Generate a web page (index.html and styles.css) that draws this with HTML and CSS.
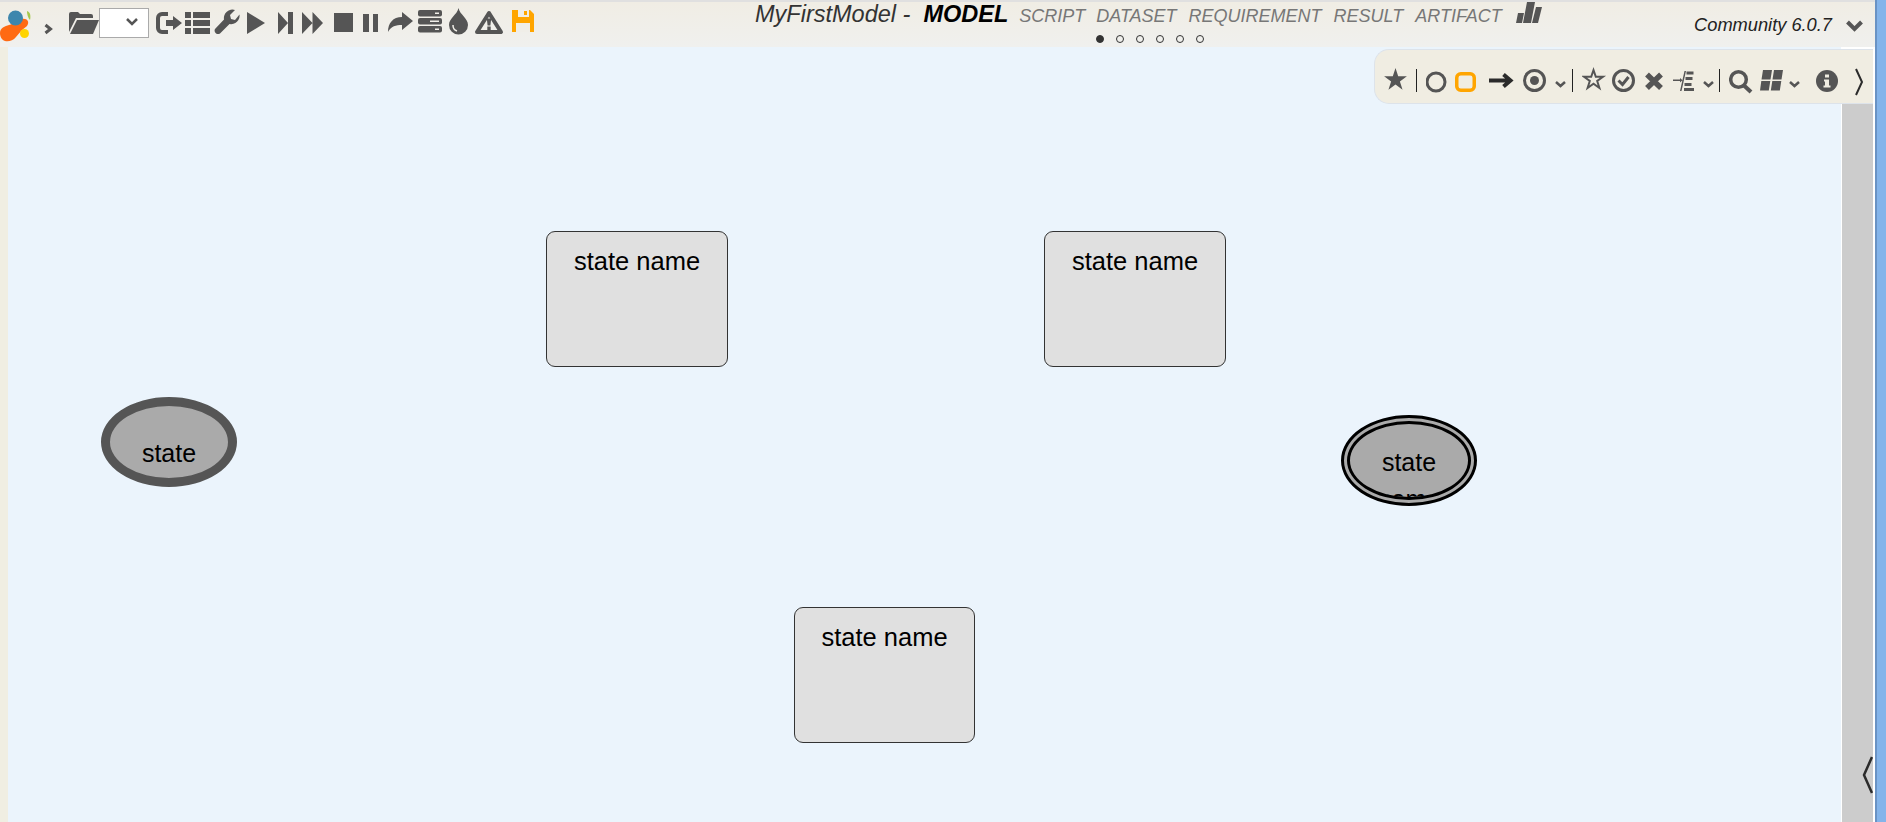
FILE: index.html
```html
<!DOCTYPE html>
<html>
<head>
    <title>MyFirstModel - MODEL</title>
    <meta name="viewport" content="width=device-width, initial-scale=1">
    <link rel="stylesheet" href="styles.css">
</head>
<body>
    <div class="app">
        <header class="topbar">
            <svg width="44" height="45" viewBox="0 2 44 45">
                <path fill="#ff6a13" d="M0 33 C0 28 5 26 9 25 C14 24 17 19 22 19 C27 18 30 22 27 26 C22 30 19 33 16 37 C13 41 8 42 5 41 C2 40 0 37 0 33Z"/>
                <circle cx="15.500" cy="18" r="7.500" fill="#3d86ad"/>
                <circle cx="24.500" cy="33.500" r="4.500" fill="#ffd400"/>
                <path fill="#a5c84a" d="M27 11 C30 12 31 15 30 20 C28 18 27 14 27 11Z"/>
            </svg>
            <svg width="24" height="45" viewBox="0 2 24 45"><path class="line" stroke-width="3" d="M1.500 25 L6.500 29 L1.500 33"/></svg>
            <svg width="31" height="45" viewBox="0 2 31 45">
                <path class="ico" d="M1 32 V14 q0-2 2-2 h7 l2 2 h11 q2 0 2 2 v2 H8 Z"/>
                <path class="ico" d="M2 34 L9 20 H31 L25 34Z"/>
            </svg>
            <div class="model-select">
                <svg width="12" height="8" viewBox="0 0 12 8"><path class="line" stroke-width="2.500" d="M1 1 L6 6 L11 1"/></svg>
            </div>
            <svg class="after-select" width="29" height="45" viewBox="0 2 29 45">
                <path class="line" stroke-width="4" d="M12 14 H6 a4 4 0 0 0 -4 4 V28 a4 4 0 0 0 4 4 H12"/>
                <path class="ico" d="M10 20 h7 v-4 l9 7 -9 7 v-4 h-7z"/>
            </svg>
            <svg width="29" height="45" viewBox="0 2 29 45">
                <path class="ico" d="M0 12 h6 v6 H0z M8 12 h17 v6 H8z M0 20 h6 v6 H0z M8 20 h17 v6 H8z M0 28 h6 v6 H0z M8 28 h17 v6 H8z"/>
            </svg>
            <svg width="33" height="45" viewBox="0 2 33 45">
                <path class="ico" d="M1 29 L10 19.500 A8.500 8.500 0 0 1 21 10 L16 15 L17 19 L21 20 L25.500 14.500 A8.500 8.500 0 0 1 15.500 24 L6 33.500 A3.500 3.500 0 0 1 1 29Z"/>
            </svg>
            <svg width="31" height="45" viewBox="0 2 31 45"><path class="ico" d="M0 12 L18 23 L0 34Z"/></svg>
            <svg width="24" height="45" viewBox="0 2 24 45"><path class="ico" d="M0 12 L10 23 L0 34Z M10 12 h5 v22 h-5z"/></svg>
            <svg width="32" height="45" viewBox="0 2 32 45"><path class="ico" d="M0 12 L10.500 23 L0 34Z M10.500 12 L21 23 L10.500 34Z"/></svg>
            <svg width="29" height="45" viewBox="0 2 29 45"><rect class="ico" x="0" y="13" width="19" height="19"/></svg>
            <svg width="25" height="45" viewBox="0 2 25 45"><path class="ico" d="M0 14 h6 v18 H0z M10 14 h5 v18 h-5z"/></svg>
            <svg width="30" height="45" viewBox="0 2 30 45"><path class="ico" d="M14 12 L25 21 L14 30 V25 C8 25 3 26 0 32 C0 23 5 17 14 17Z"/></svg>
            <svg width="31" height="45" viewBox="0 2 31 45">
                <rect class="ico" x="0" y="10" width="24" height="6.500" rx="2"/>
                <rect class="ico" x="0" y="18" width="24" height="6.500" rx="2"/>
                <rect class="ico" x="0" y="26" width="24" height="6.500" rx="2"/>
                <path class="cut" d="M17 12.500 h4 v1.500 h-4z M12 20.500 h9 v1.500 h-9z M17 28.500 h4 v1.500 h-4z"/>
            </svg>
            <svg width="26" height="45" viewBox="0 2 26 45">
                <path class="ico" d="M9.500 8 C11 15 19 18 19 25 A9.500 9.500 0 0 1 0 25 C0 18 8 15 9.500 8Z"/>
                <path class="line cut-line" stroke-width="1.500" d="M4 25 A5.500 6 0 0 0 8 31"/>
            </svg>
            <svg width="37" height="45" viewBox="0 2 37 45">
                <path class="line" stroke-width="4" stroke-linejoin="round" d="M14 13 L26 32 H2Z"/>
                <path class="ico" d="M11.800 18.500 h4.400 l-.8 7 h-2.800z M12.300 26.500 h3.400 v3.500 h-3.400z"/>
            </svg>
            <svg width="22" height="45" viewBox="0 2 22 45">
                <path fill="#ffa500" d="M0 10 H18 L22 14 V32 H0Z"/>
                <path class="cut" d="M6 10 h11 v7 H6z M4 23 h14 v9 H4z"/>
                <path fill="#ffa500" d="M12 11 h3 v4 h-3z"/>
            </svg>

            <div class="title-block">
                <div class="title-row">
                    <span class="model-name">MyFirstModel -</span>
                    <span class="tab-current">MODEL</span>
                    <span class="tab tab-first">SCRIPT</span>
                    <span class="tab">DATASET</span>
                    <span class="tab">REQUIREMENT</span>
                    <span class="tab">RESULT</span>
                    <span class="tab">ARTIFACT</span>
                    <svg class="chart" width="26" height="21" viewBox="0 0 26 21">
                        <path class="ico" d="M2 11 H8 L6 21 H0Z M11 0 H19 L15 21 H7Z M20 5 H26 L22 21 H16Z"/>
                    </svg>
                </div>
                <div class="dots">
                    <span class="dot dot-on"></span>
                    <span class="dot"></span>
                    <span class="dot"></span>
                    <span class="dot"></span>
                    <span class="dot"></span>
                    <span class="dot"></span>
                </div>
            </div>

            <div class="version">Community 6.0.7</div>
            <svg class="version-arrow" width="17" height="12" viewBox="0 0 17 12"><path class="line" stroke-width="4" d="M1.500 2 L8.500 9 L15.500 2"/></svg>
        </header>

        <div class="workspace">
            <div class="edge"></div>
            <main class="canvas">
                <div class="state-box box-a">state name</div>
                <div class="state-box box-b">state name</div>
                <div class="state-box box-c">state name</div>
                <div class="state-start">state</div>
                <div class="state-end">state name</div>
            </main>
            <aside class="side-panel">
                <svg class="panel-open" width="11" height="38" viewBox="0 0 11 38"><path class="line dark" stroke-width="2.500" d="M10 1 L2 19 L10 37"/></svg>
            </aside>

            <div class="palette">
                <svg width="32" height="53" viewBox="0 50 32 53"><polygon class="ico" points="11.500,68 14.200,76.300 22.900,76.300 15.900,81.400 18.550,89.700 11.500,84.600 4.450,89.700 7.100,81.400 0.100,76.300 8.800,76.300"/></svg>
                <span class="sep"></span>
                <svg width="29" height="53" viewBox="0 50 29 53"><circle class="line" stroke-width="3" cx="10" cy="82" r="9"/></svg>
                <svg width="33" height="53" viewBox="0 50 33 53"><rect fill="none" stroke="#ffa500" stroke-width="3.500" x="1.750" y="73.750" width="17.500" height="16.500" rx="4"/></svg>
                <svg width="35" height="53" viewBox="0 50 35 53"><path class="line dark" stroke-width="4" d="M1 80.500 H22 M15.500 74.500 L22.500 80.500 L15.500 86.500"/></svg>
                <svg width="32" height="53" viewBox="0 50 32 53"><circle class="line" stroke-width="3" cx="11.500" cy="80.500" r="10"/><circle class="ico" cx="11.500" cy="80.500" r="4.500"/></svg>
                <svg width="17" height="53" viewBox="0 50 17 53"><path class="line" stroke-width="2.500" d="M1 82 L5.500 86 L10 82"/></svg>
                <span class="sep"></span>
                <svg width="30" height="53" viewBox="0 50 30 53"><polygon class="line" stroke-width="2" points="11.500,70 13.800,76.800 21,76.800 15.200,81 17.400,88 11.500,83.800 5.600,88 7.800,81 2,76.800 9.200,76.800"/></svg>
                <svg width="32" height="53" viewBox="0 50 32 53"><circle class="line" stroke-width="3" cx="11.500" cy="80.500" r="10"/><path class="line" stroke-width="3" d="M6.500 80.500 L10.500 84.500 L16.500 77"/></svg>
                <svg width="29" height="53" viewBox="0 50 29 53"><path class="line" stroke-width="5.500" d="M3 74.500 L17 88 M17 74.500 L3 88"/></svg>
                <svg width="30" height="53" viewBox="0 50 30 53">
                    <path class="ico" d="M0 79.500 h7 v-1.500 l2.500 2.200 -2.500 2.200 v-1.400 H0z M11.500 71 h1.500 L8.500 91 H7z M13.500 71.500 h7 v3 h-7z M12.500 77 h7 v3 h-7z M11.500 83 h7 v3 h-7z M11 88 h10 v3 h-10z"/>
                </svg>
                <svg width="16" height="53" viewBox="0 50 16 53"><path class="line" stroke-width="2.500" d="M1 82 L5.500 86 L10 82"/></svg>
                <span class="sep"></span>
                <svg width="31" height="53" viewBox="0 50 31 53"><circle class="line" stroke-width="3.500" cx="9.500" cy="79.500" r="7.800"/><path class="line" stroke-width="4" d="M15 85.500 L22 92"/></svg>
                <svg width="29" height="53" viewBox="0 50 29 53"><path class="ico" d="M3 70 H12 L10.500 79.500 H1.500Z M14 70 H23 L21.500 79.500 H12.500Z M1.300 81 H10.300 L8.800 90.500 H0Z M12.300 81 H21.300 L19.800 90.500 H10.800Z"/></svg>
                <svg width="27" height="53" viewBox="0 50 27 53"><path class="line" stroke-width="2.500" d="M1 82 L5.500 86 L10 82"/></svg>
                <svg width="39" height="53" viewBox="0 50 39 53">
                    <circle class="ico" cx="11" cy="81" r="11"/>
                    <path class="cut-light" d="M9 74.500 h4 v3 h-4z M8 79.500 h5 v6 h1.500 v2 h-7 v-2 H9 v-4 H8z"/>
                </svg>
                <svg width="10" height="53" viewBox="0 50 10 53"><path class="line dark" stroke-width="2" d="M1 69 L7 82 L1 95"/></svg>
            </div>
        </div>
    </div>
</body>
</html>
```

FILE: styles.css
```css
html, body { margin: 0; height: 100%; overflow: hidden; }
body { font-family: "Liberation Sans", Arial, sans-serif; background: #84b4ea; }
svg { display: block; flex: none; }

.app { width: 1875px; height: 100%; border-right: 2px solid #6a93c4; display: flex; flex-direction: column; }

/* Icons */
.ico { fill: #555; }
.line { fill: none; stroke: #555; }
.line.dark { stroke: #2b2b2b; }
.cut { fill: #f0eee8; }
.cut-line { stroke: #f0eee8; }
.cut-light { fill: #f0ede2; }

/* Top bar */
.topbar { height: 47px; box-sizing: border-box; border-top: 2px solid #e0e0e0; padding-right: 12px; background: linear-gradient(#f0ede4, #f0f0ee); display: flex; }
.model-select { flex: none; width: 50px; height: 30px; box-sizing: border-box; margin-top: 6px; padding: 9px 0 0 26px; border: 1px solid #aaa; background: white; }
.after-select { margin-left: 7px; }

.title-block { margin-left: 221px; display: flex; flex-direction: column; }
.title-row { height: 24px; margin-top: -1px; display: flex; align-items: baseline; gap: 12px; font-style: italic; white-space: nowrap; }
.chart { align-self: flex-start; margin: 1px 0 0 2px; }
.model-name { font-size: 23.500px; color: #333; }
.tab-current { margin: 0 -1px 0 1px; font-size: 23.500px; font-weight: bold; color: black; }
.tab { font-size: 18px; color: #777; }
.tab-first { margin-right: -1px; }

.dots { margin: 10px 0 0 341px; display: flex; gap: 12px; }
.dot { width: 8px; height: 8px; box-sizing: border-box; border: 1px solid #333; border-radius: 50%; }
.dot-on { background: #333; }

.version { margin: 12px 0 0 auto; font-size: 18.250px; font-style: italic; color: #222; }
.version-arrow { margin: 18px 0 0 14px; }

/* Work area */
.workspace { flex: 1; position: relative; display: flex; background: white; }
.edge { width: 8px; background: #f0eee2; }
.canvas { flex: 1; position: relative; background: #ebf4fc; overflow: hidden; }
.side-panel { width: 31px; margin: 3px 2px 0 1px; position: relative; background: #ccc; }
.panel-open { position: absolute; left: 20px; top: 706px; }

/* Diagram nodes */
.state-box { position: absolute; width: 182px; height: 136px; box-sizing: border-box; padding-top: 14px; border: 1px solid #333; border-radius: 9px; background: #e0e0e0; font-size: 25.500px; line-height: 30px; text-align: center; }
.box-a { left: 538px; top: 184px; }
.box-b { left: 1036px; top: 184px; }
.box-c { left: 786px; top: 560px; width: 181px; }

.state-start { position: absolute; left: 93px; top: 350px; width: 136px; height: 90px; box-sizing: border-box; padding-top: 32px; border: 9px solid #555; border-radius: 50%; background: #aaa; font-size: 25px; line-height: 30px; text-align: center; }
.state-end { position: absolute; left: 1333px; top: 368px; width: 136px; height: 91px; box-sizing: border-box; padding: 19.500px 20px 0; border: 9px double black; border-radius: 50%; background: #aaa; font-size: 25px; line-height: 37px; text-align: center; overflow: hidden; }

/* Floating palette */
.palette { position: absolute; left: 1374px; top: 2px; width: 499px; height: 55px; box-sizing: border-box; padding-left: 9px; border: 1px solid #dde3ea; border-right: none; border-radius: 15px 0 0 15px; background: #f0ede2; display: flex; }
.sep { flex: none; width: 9px; height: 23px; margin-top: 19px; border-left: 1px solid #222; }
```
